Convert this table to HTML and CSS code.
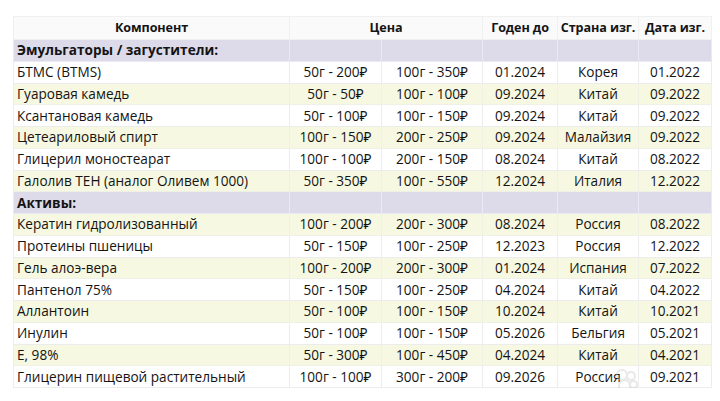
FILE: index.html
```html
<!DOCTYPE html>
<html lang="ru">
<head>
<meta charset="utf-8">
<link rel="stylesheet" href="styles.css">
</head>
<body>
<div class="sheet">
<table class="grid">
  <colgroup>
    <col class="c-name"><col class="c-p1"><col class="c-p2"><col class="c-exp"><col class="c-country"><col class="c-date">
  </colgroup>
  <thead>
    <tr class="head">
      <th>Компонент</th>
      <th colspan="2">Цена</th>
      <th>Годен до</th>
      <th>Страна изг.</th>
      <th>Дата изг.</th>
    </tr>
  </thead>
  <tbody>
    <tr class="section"><td>Эмульгаторы / загустители:</td><td></td><td></td><td></td><td></td><td></td></tr>
    <tr><td>БТМС (BTMS)</td><td>50г - 200₽</td><td>100г - 350₽</td><td>01.2024</td><td>Корея</td><td>01.2022</td></tr>
    <tr class="alt"><td>Гуаровая камедь</td><td>50г - 50₽</td><td>100г - 100₽</td><td>09.2024</td><td>Китай</td><td>09.2022</td></tr>
    <tr><td>Ксантановая камедь</td><td>50г - 100₽</td><td>100г - 150₽</td><td>09.2024</td><td>Китай</td><td>09.2022</td></tr>
    <tr class="alt"><td>Цетеариловый спирт</td><td>100г - 150₽</td><td>200г - 250₽</td><td>09.2024</td><td>Малайзия</td><td>09.2022</td></tr>
    <tr><td>Глицерил моностеарат</td><td>100г - 100₽</td><td>200г - 150₽</td><td>08.2024</td><td>Китай</td><td>08.2022</td></tr>
    <tr class="alt"><td>Галолив ТЕН (аналог Оливем 1000)</td><td>50г - 350₽</td><td>100г - 550₽</td><td>12.2024</td><td>Италия</td><td>12.2022</td></tr>
    <tr class="section"><td>Активы:</td><td></td><td></td><td></td><td></td><td></td></tr>
    <tr class="alt"><td>Кератин гидролизованный</td><td>100г - 200₽</td><td>200г - 300₽</td><td>08.2024</td><td>Россия</td><td>08.2022</td></tr>
    <tr><td>Протеины пшеницы</td><td>50г - 150₽</td><td>100г - 250₽</td><td>12.2023</td><td>Россия</td><td>12.2022</td></tr>
    <tr class="alt"><td>Гель алоэ-вера</td><td>100г - 200₽</td><td>200г - 300₽</td><td>01.2024</td><td>Испания</td><td>07.2022</td></tr>
    <tr><td>Пантенол 75%</td><td>50г - 150₽</td><td>100г - 250₽</td><td>04.2024</td><td>Китай</td><td>04.2022</td></tr>
    <tr class="alt"><td>Аллантоин</td><td>50г - 100₽</td><td>100г - 150₽</td><td>10.2024</td><td>Китай</td><td>10.2021</td></tr>
    <tr><td>Инулин</td><td>50г - 100₽</td><td>100г - 150₽</td><td>05.2026</td><td>Бельгия</td><td>05.2021</td></tr>
    <tr class="alt"><td>Е, 98%</td><td>50г - 300₽</td><td>100г - 450₽</td><td>04.2024</td><td>Китай</td><td>04.2021</td></tr>
    <tr><td>Глицерин пищевой растительный</td><td>100г - 100₽</td><td>300г - 200₽</td><td>09.2026</td><td>Россия</td><td>09.2021</td></tr>
  </tbody>
</table>
<div class="watermark" aria-hidden="true">
  <i class="d1"></i><i class="d2"></i><i class="d3"></i><i class="d4"></i>
</div>
</div>
</body>
</html>
```

FILE: styles.css
```css
html, body {
  margin: 0;
  padding: 0;
  background: #ffffff;
}
body {
  font-family: "Open Sans", "Noto Sans", "DejaVu Sans", sans-serif;
  color: #141414;
}
.sheet {
  position: relative;
  padding: 16px 9px 0 13px;
  width: 698px;
}
.grid {
  border-collapse: collapse;
  table-layout: fixed;
  width: 698px;
  font-size: 13.6px;
}
.c-name { width: 276px; }
.c-p1 { width: 92px; }
.c-p2 { width: 101px; }
.c-exp { width: 75px; }
.c-country { width: 81px; }
.c-date { width: 73px; }

.grid tr {
  height: 21.75px;
}
.grid th, .grid td {
  border: 1px solid #ececec;
  padding: 0 3px;
  white-space: nowrap;
  overflow: hidden;
  text-align: center;
  line-height: 18px;
}
.grid td:first-child {
  text-align: left;
}
.grid .head {
  height: 23px;
}
.head th {
  font-weight: 700;
  font-size: 12.6px;
  padding: 0;
  overflow: visible;
  letter-spacing: -0.1px;
  background: #fafafa;
  border-color: #f0f0f0;
}
.section td {
  background: #dddbea;
  border-color: #ebe9f3;
  font-weight: 700;
}
.alt td {
  background: #f6f8e1;
  border-color: #f0f1e6;
}

.watermark {
  position: absolute;
  left: 616px;
  top: 369px;
  width: 22px;
  height: 20px;
  opacity: 0.4;
}
.watermark i {
  position: absolute;
  border-radius: 50%;
  border: 2px solid #c8c8c8;
}
.d1 { left: 0; top: 0; width: 8px; height: 8px; }
.d2 { left: 10px; top: 2px; width: 6px; height: 6px; }
.d3 { left: 2px; top: 10px; width: 9px; height: 9px; }
.d4 { left: 13px; top: 11px; width: 5px; height: 5px; }
```
